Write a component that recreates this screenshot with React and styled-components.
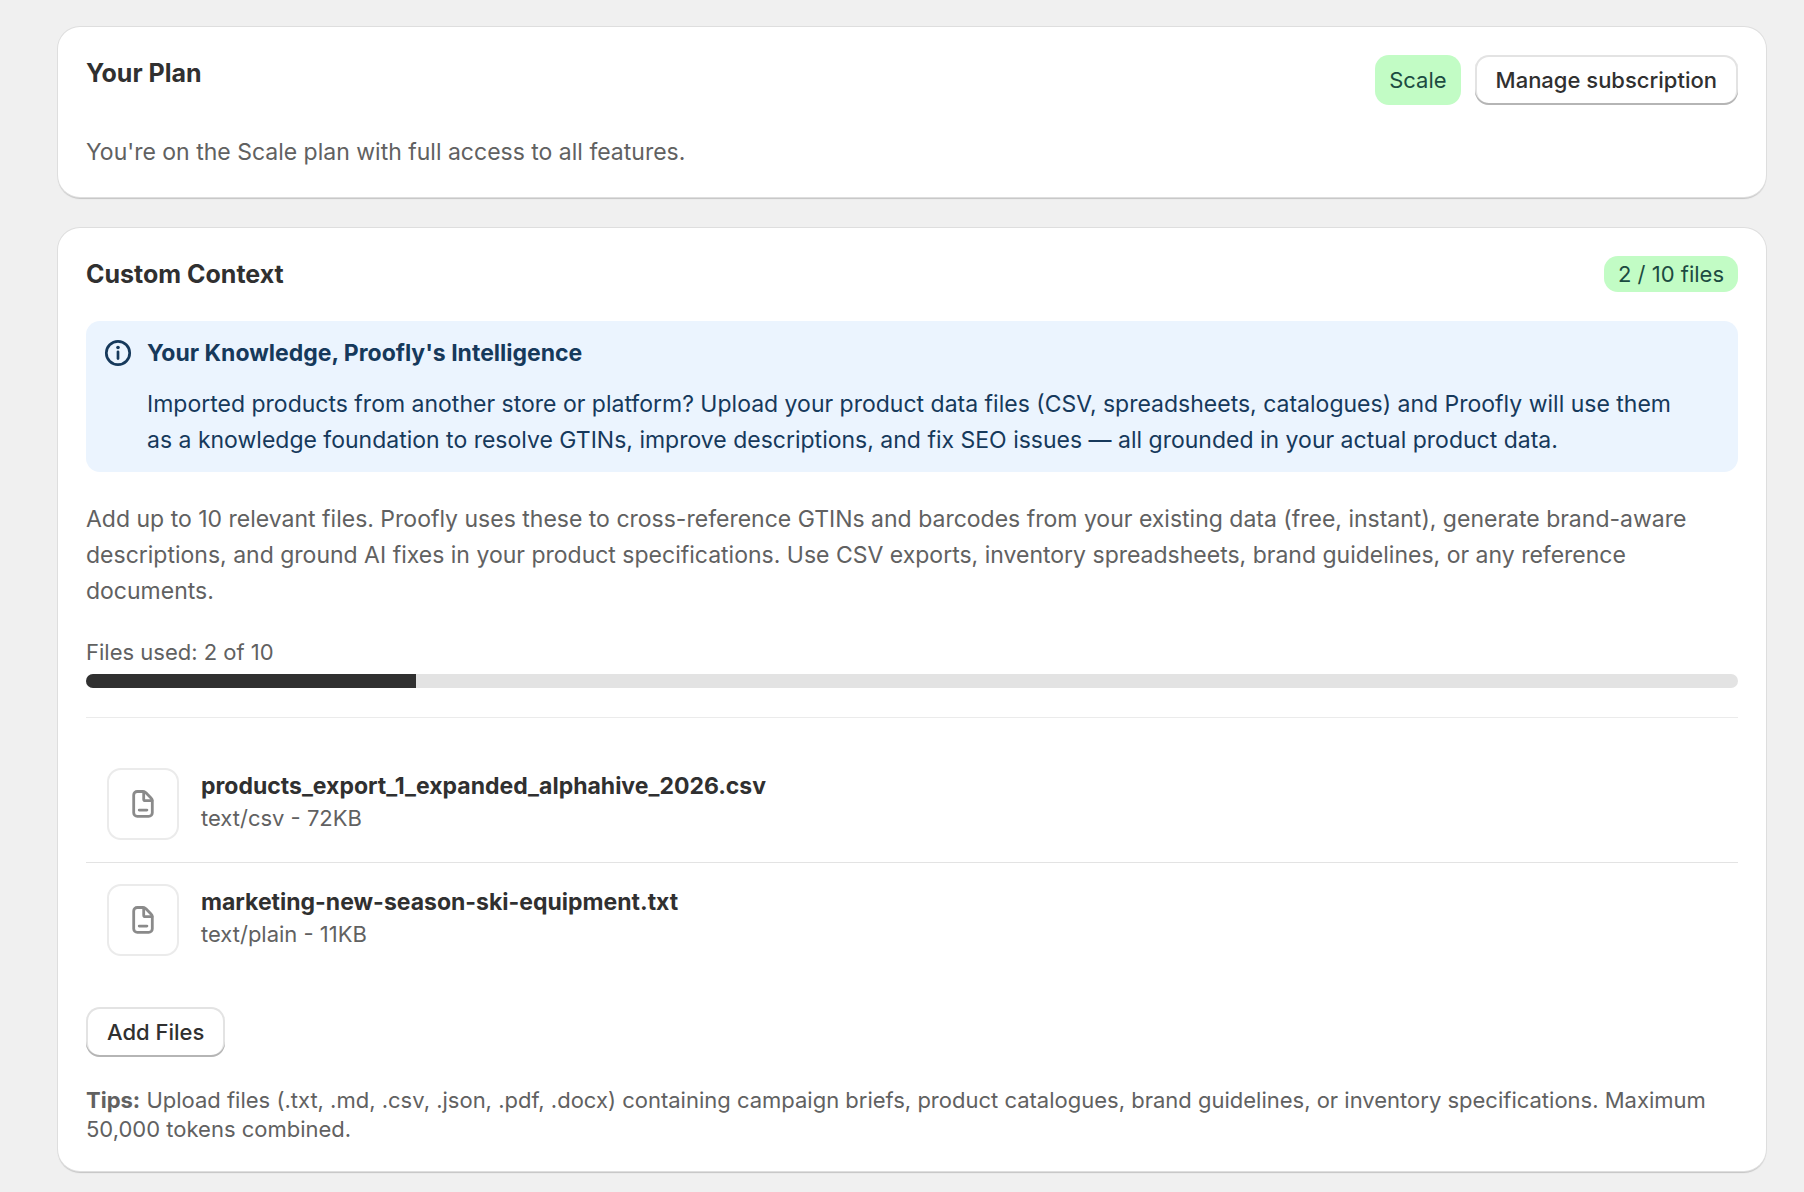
import React from "react";
import styled, { createGlobalStyle } from "styled-components";

const Global = createGlobalStyle`
  * { box-sizing: border-box; }
  body {
    margin: 0;
    background: #f0f0f0;
    color: #303030;
    font-family: Inter, "Liberation Sans", sans-serif;
    font-size: 23px;
    line-height: 36px;
  }
  h2, h3, p, ul { margin: 0; padding: 0; }
`;

const Page = styled.main`
  display: flex;
  flex-direction: column;
  gap: 31px;
  padding: 27px 38px 21px 58px;
`;

const Card = styled.section`
  display: flex;
  flex-direction: column;
  gap: 29px;
  padding: 28px 28px 27px;
  background: #fff;
  border-radius: 22px;
  box-shadow: 0 0 0 1px #dedede, 0 2px 1px #c4c4c4;
`;

const CardHeader = styled.header`
  display: flex;
  justify-content: space-between;
  align-items: flex-start;
`;

const Title = styled.h2`
  font-size: 25px;
  font-weight: 650;
  line-height: 36px;
`;

const Actions = styled.div`
  display: flex;
  gap: 14px;
`;

const Badge = styled.span`
  display: flex;
  align-items: center;
  padding: 0 14px;
  min-height: 36px;
  border-radius: 14px;
  background: #c2fcc5;
  color: #1c4b41;
  font-size: 22px;
  line-height: 28px;
`;

const Button = styled.button`
  align-self: flex-start;
  height: 50px;
  padding: 0 21px;
  border: 0;
  border-radius: 14px;
  background: #fff;
  color: #303030;
  font: 550 22px/28px Inter, "Liberation Sans", sans-serif;
  box-shadow: inset 0 -2px 0 #b5b5b5, inset 0 0 0 2px #e3e3e3;
`;

const Body = styled.p`
  color: #616161;
`;

const Banner = styled.div`
  display: flex;
  gap: 14px;
  padding: 14px 48px 14px 18px;
  border-radius: 14px;
  background: #ebf4fe;
  color: #16395b;
`;

const BannerIcon = styled.svg`
  flex: none;
  width: 29px;
  height: 36px;
`;

const BannerText = styled.div`
  display: flex;
  flex-direction: column;
  gap: 15px;
`;

const BannerTitle = styled.h3`
  font-size: 23px;
  font-weight: 700;
  line-height: 36px;
`;

const Usage = styled.div`
  display: flex;
  flex-direction: column;
  gap: 7px;
`;

const Small = styled.p`
  color: #616161;
  font-size: 22px;
  line-height: 29px;
`;

const Track = styled.div`
  height: 14px;
  overflow: hidden;
  border-radius: 7px;
  background: #e3e3e3;
`;

const Fill = styled.div`
  height: 100%;
  background: #303030;
`;

const Files = styled.ul`
  padding-top: 28px;
  border-top: 1px solid #ebebeb;
  list-style: none;
`;

const FileRow = styled.li`
  display: flex;
  align-items: flex-start;
  gap: 22px;
  padding: 22px 21px;

  & + & {
    padding-top: 21px;
    border-top: 1px solid #e3e3e3;
  }
`;

const Thumb = styled.span`
  display: flex;
  align-items: center;
  justify-content: center;
  width: 72px;
  height: 72px;
  border: 2px solid #ebebeb;
  border-radius: 14px;
`;

const FileName = styled.h3`
  font-size: 23px;
  font-weight: 700;
  line-height: 36px;
`;

const files = [
  { name: "products_export_1_expanded_alphahive_2026.csv", meta: "text/csv - 72KB" },
  { name: "marketing-new-season-ski-equipment.txt", meta: "text/plain - 11KB" },
];
const limit = 10;

const InfoIcon = () => (
  <BannerIcon viewBox="0 0 29 36" fill="none" stroke="currentColor" strokeWidth="2.7" aria-hidden="true">
    <circle cx="14" cy="18" r="11.7" />
    <path d="M14 16.800v6.800" strokeLinecap="round" />
    <circle cx="14" cy="12.500" r="1.800" fill="currentColor" stroke="none" />
  </BannerIcon>
);

const FileIcon = () => (
  <svg width="36" height="36" viewBox="0 0 36 36" fill="none" stroke="#8a8a8a" strokeWidth="2.800" strokeLinejoin="round" strokeLinecap="round" aria-hidden="true">
    <path d="M12.300 5.500h5.600c1.100 0 2.200.5 3 1.300l5.100 5.200c.8.8 1.300 1.900 1.300 3V26.700c0 2-1.600 3.600-3.600 3.600h-11.400c-2 0-3.600-1.600-3.600-3.600V9.100c0-2 1.600-3.600 3.600-3.600Z" />
    <path d="M18.700 6v7.200c0 .8.600 1.400 1.400 1.400h7" />
    <path d="M14.200 24.100h7.700" />
  </svg>
);

export default function App() {
  return (
    <>
      <Global />
      <Page>
        <Card>
          <CardHeader>
            <Title>Your Plan</Title>
            <Actions>
              <Badge>Scale</Badge>
              <Button type="button">Manage subscription</Button>
            </Actions>
          </CardHeader>
          <Body>You're on the Scale plan with full access to all features.</Body>
        </Card>
        <Card>
          <CardHeader>
            <Title>Custom Context</Title>
            <Badge>{files.length} / {limit} files</Badge>
          </CardHeader>
          <Banner>
            <InfoIcon />
            <BannerText>
              <BannerTitle>Your Knowledge, Proofly's Intelligence</BannerTitle>
              <p>
                Imported products from another store or platform? Upload your product data files (CSV, spreadsheets, catalogues) and Proofly will use them as a knowledge foundation to resolve GTINs, improve descriptions, and fix SEO issues — all grounded in your actual product data.
              </p>
            </BannerText>
          </Banner>
          <Body>
            Add up to 10 relevant files. Proofly uses these to cross-reference GTINs and barcodes from your existing data (free, instant), generate brand-aware descriptions, and ground AI fixes in your product specifications. Use CSV exports, inventory spreadsheets, brand guidelines, or any reference documents.
          </Body>
          <Usage>
            <Small id="usage">Files used: {files.length} of {limit}</Small>
            <Track role="progressbar" aria-labelledby="usage" aria-valuenow={files.length} aria-valuemax={limit}>
              <Fill style={{ width: `${(files.length / limit) * 100}%` }} />
            </Track>
          </Usage>
          <Files>
            {files.map((file) => (
              <FileRow key={file.name}>
                <Thumb><FileIcon /></Thumb>
                <div>
                  <FileName>{file.name}</FileName>
                  <Small>{file.meta}</Small>
                </div>
              </FileRow>
            ))}
          </Files>
          <Button type="button">Add Files</Button>
          <Small>
            <strong>Tips:</strong> Upload files (.txt, .md, .csv, .json, .pdf, .docx) containing campaign briefs, product catalogues, brand guidelines, or inventory specifications. Maximum 50,000 tokens combined.
          </Small>
        </Card>
      </Page>
    </>
  );
}
